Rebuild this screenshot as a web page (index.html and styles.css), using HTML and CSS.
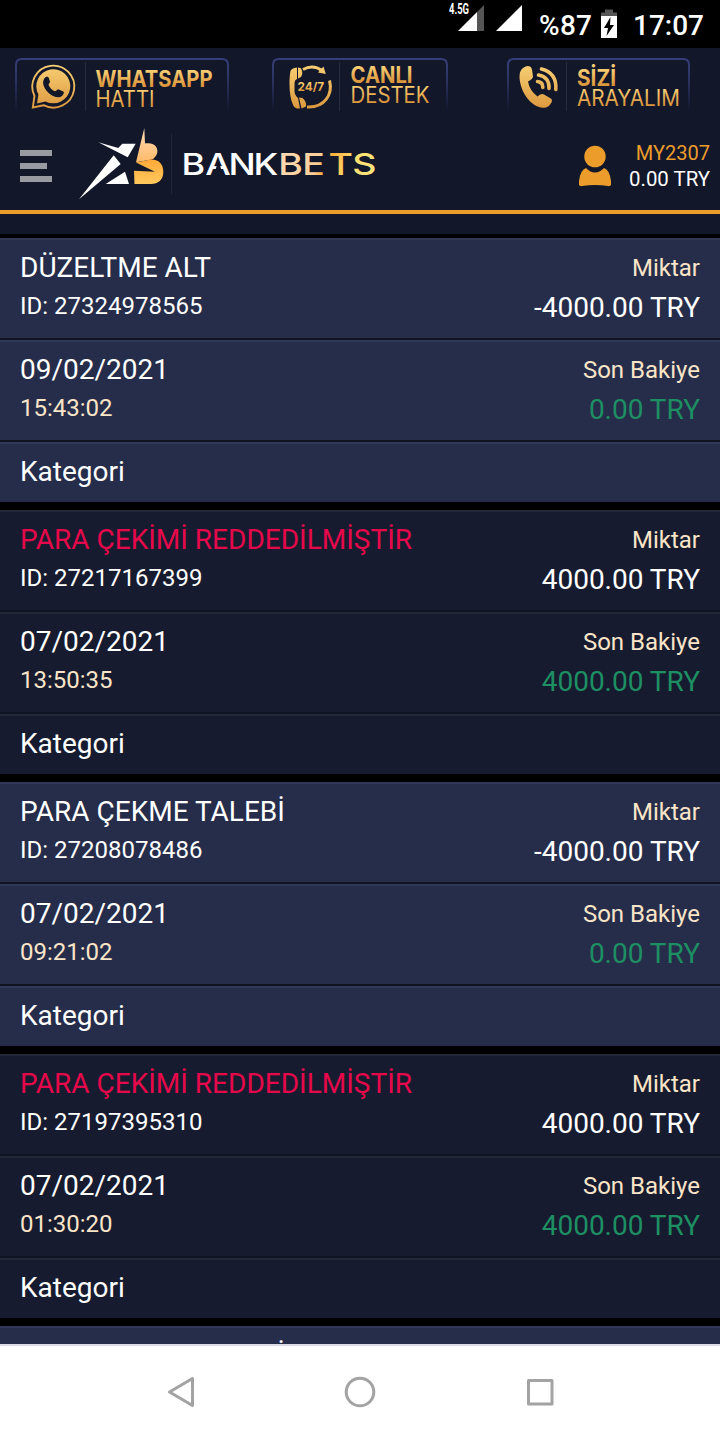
FILE: index.html
```html
<!DOCTYPE html>
<html lang="tr">
<head>
    <meta charset="UTF-8">
    <title>Bankbets</title>
    <link rel="stylesheet" href="styles.css">
</head>
<body>
    <div class="status">
        <svg width="260" height="48" viewBox="445 0 260 48">
            <text class="net" x="449" y="14" textLength="20" lengthAdjust="spacingAndGlyphs">4.5G</text>
            <path fill="#fff" d="M458 31L477 12V31z"/>
            <path fill="#555" d="M477 12L484 5V31H477z"/>
            <path fill="#fff" d="M496 31L522 5V31z"/>
            <text class="stat" x="539" y="35" textLength="53">%87</text>
            <path fill="#555" d="M605 9.500h8v3h4v4h-16v-4h4z"/>
            <path fill="#fff" d="M601 16h16v22h-16z"/>
            <path d="M610.500 17L604 28h4l-1.500 8 7.500-11h-4z"/>
            <text class="stat" x="633" y="35" textLength="71">17:07</text>
        </svg>
    </div>
    <div class="header">
        <div class="contact">
            <svg width="214" height="56" viewBox="15 58 214 56">
                <defs>
                    <linearGradient id="line" x1="0" y1="58" x2="0" y2="112" gradientUnits="userSpaceOnUse">
                        <stop offset="0" stop-color="#363f79"/>
                        <stop offset=".4" stop-color="#2c3464"/>
                        <stop offset="1" stop-color="#12172a"/>
                    </linearGradient>
                    <linearGradient id="gold" x1="0" y1="0" x2="0" y2="1">
                        <stop offset="0" stop-color="#f8cf74"/>
                        <stop offset=".25" stop-color="#f6ca70"/>
                        <stop offset=".75" stop-color="#dc983e"/>
                    </linearGradient>
                    <linearGradient id="goldline" x1="0" y1="65" x2="0" y2="109" gradientUnits="userSpaceOnUse">
                        <stop offset="0" stop-color="#f8cf74"/>
                        <stop offset="1" stop-color="#dc983e"/>
                    </linearGradient>
                </defs>
                <path class="frame" d="M16 112V65q0-6 6-6H222q6 0 6 6V112"/>
                <path class="sep" d="M85.500 62V111"/>
                <path fill="none" stroke="url(#goldline)" stroke-width="1.900" d="M34.500 96A21 21 0 1 1 43.500 105.200L32.800 107.500z"/>
                <path fill="url(#goldline)" d="M38.400 94.500A17 17 0 1 1 45.500 101.400L37 103.600z"/>
                <path fill="#12172a" d="M45.500 77.200c1.500-.8 2.900-.4 3.300.9l1.200 3.400c.3 1-1.600 2.400-1.400 3.400 1.200 3 3.300 5 6.300 6.300 1.300.4 2.600-2.200 3.800-1.800l4.600 2.200c1.600.9-.4 5.400-4.300 5.700-7.500.3-15.700-8.200-15.900-14.400 0-2.400.9-4.700 2.400-5.700z"/>
                <text class="big" x="95.500" y="87" textLength="117" lengthAdjust="spacingAndGlyphs">WHATSAPP</text>
                <text class="thin" x="95.500" y="107" textLength="59" lengthAdjust="spacingAndGlyphs">HATTI</text>
            </svg>
            <svg width="177" height="56" viewBox="272 58 177 56">
                <path class="frame" d="M273 112V65q0-6 6-6H441q6 0 6 6V112"/>
                <path class="sep" d="M339.500 62V111"/>
                <path fill="url(#goldline)" d="M290.500 71q1-3 6.500-3.500v11.500q-2.500 1-2.500 4v8q0 4 3.500 7l2 10.500h-3q-3.500-1-4.500-5-3-7-3-20 0-8 1-12.500z"/>
                <path fill="url(#goldline)" d="M298 67.500l3 .8q2.500 5 0 8.700l-3 1.500zM299 97.500l3.500.5q4.500 4 3.500 8.500l-4.500 2z"/>
                <path fill="none" stroke="url(#goldline)" stroke-width="3" d="M303 69.500Q313 64 322 70.500M329.500 80.500C333 94 325 108 307 107"/>
                <path fill="url(#goldline)" d="M323.500 66.500L325.800 74 318 72.500z"/>
                <text class="day" x="297.500" y="91" textLength="26.500" lengthAdjust="spacingAndGlyphs">24/7</text>
                <text class="big" x="350.500" y="83" textLength="62" lengthAdjust="spacingAndGlyphs">CANLI</text>
                <text class="thin" x="350.500" y="103" textLength="79" lengthAdjust="spacingAndGlyphs">DESTEK</text>
            </svg>
            <svg width="183" height="56" viewBox="507 58 183 56">
                <path class="frame" d="M508 112V65q0-6 6-6H683q6 0 6 6V112"/>
                <path class="sep" d="M566.500 62V111"/>
                <path fill="url(#goldline)" d="M523 68q4-3 7-1.500 2 1 2.300 5l.7 5q0 2.500-5 5 1.500 9 9.500 15 4-3.500 6.500-2l6 3.500q3 1.500 1.500 4.500-3 5.500-8.500 5.200C531 107 520 92 519.500 77q0-6.500 3.500-9z"/>
                <path class="wave" d="M537.500 81.500Q543 82 542.800 87.500M538.500 75Q549.500 77 549 88.500M541.500 69Q557 73 555.800 89.500"/>
                <text class="big" x="577" y="86" textLength="39" lengthAdjust="spacingAndGlyphs">SİZİ</text>
                <text class="thin" x="577" y="106" textLength="103" lengthAdjust="spacingAndGlyphs">ARAYALIM</text>
            </svg>
        </div>
        <div class="bar">
            <div class="menu">
                <span></span>
                <span class="short"></span>
                <span></span>
            </div>
            <svg class="logo" width="300" height="76" viewBox="78 126 300 76">
                <defs>
                    <linearGradient id="bets" x1="224" y1="153" x2="296" y2="176" gradientUnits="userSpaceOnUse">
                        <stop offset="0" stop-color="#ffdab3"/>
                        <stop offset=".42" stop-color="#ffcf99"/>
                        <stop offset=".52" stop-color="#ffad3f"/>
                        <stop offset=".78" stop-color="#ffe06f"/>
                        <stop offset="1" stop-color="#ffe47d"/>
                    </linearGradient>
                    <linearGradient id="peach" x1="0" y1="0" x2="0" y2="1">
                        <stop offset="0" stop-color="#ffddb8"/>
                        <stop offset="1" stop-color="#ffb968"/>
                    </linearGradient>
                    <linearGradient id="amber" x1="0" y1="0" x2="0" y2="1">
                        <stop offset="0" stop-color="#ffa939"/>
                        <stop offset="1" stop-color="#ffc95c"/>
                    </linearGradient>
                </defs>
                <path fill="#fff" d="M98.300 142.300L118.300 148 122.300 143.700H135.700L127.700 157.300zM79 199.300L113.700 155.300 120.700 164zM105.700 184L125 171.700 129 184z"/>
                <path fill="url(#peach)" d="M144.300 128L145 143.300H149C157 143.300 160 152 155 157Q153.500 159 151.500 159.500L136 162.300z"/>
                <path fill="url(#amber)" d="M136 162.500L151 159.500C160 159.500 163.300 165 163.300 172 163.300 180 158 184 151 184H134.500L134 170.700 155 171.700z"/>
                <path stroke="#24273a" d="M171.500 134V194"/>
                <text class="brand" transform="scale(1.2 1)" y="175" x="151.300 171 190.500 211.300">BANK</text>
                <text class="brand bets" transform="scale(1.25 1)" y="175" x="222.600 241.800 262.800 281.800">BETS</text>
                <!-- the A has no crossbar -->
                <path fill="#12172a" d="M218.400 161L223.300 175.500H213.500z"/>
            </svg>
            <svg class="user" width="32" height="42" viewBox="579 145 32 42">
                <ellipse cx="595" cy="156.500" rx="10.700" ry="10.800"/>
                <path d="M586 168q9 9 18 0 5.500 1.500 7 13v4q-1 1.500-3 1-13-2-26 0-2 .5-3-1v-4q1.500-11.500 7-13z"/>
            </svg>
            <div class="account">
                <div class="name">MY2307</div>
                <div class="money">0.00 TRY</div>
            </div>
        </div>
    </div>
    <div class="list">
        <div class="item">
            <div class="row">
                <div class="left"><p>DÜZELTME ALT</p><p class="id">ID: 27324978565</p></div>
                <div class="right"><p>Miktar</p><p class="sum">-4000.00 TRY</p></div>
            </div>
            <div class="row">
                <div class="left"><p>09/02/2021</p><p class="time">15:43:02</p></div>
                <div class="right"><p>Son Bakiye</p><p class="sum green">0.00 TRY</p></div>
            </div>
            <div class="row cat"><div class="left"><p>Kategori</p></div></div>
        </div>
        <div class="item dark">
            <div class="row">
                <div class="left"><p class="red">PARA ÇEKİMİ REDDEDİLMİŞTİR</p><p class="id">ID: 27217167399</p></div>
                <div class="right"><p>Miktar</p><p class="sum">4000.00 TRY</p></div>
            </div>
            <div class="row">
                <div class="left"><p>07/02/2021</p><p class="time">13:50:35</p></div>
                <div class="right"><p>Son Bakiye</p><p class="sum green">4000.00 TRY</p></div>
            </div>
            <div class="row cat"><div class="left"><p>Kategori</p></div></div>
        </div>
        <div class="item">
            <div class="row">
                <div class="left"><p>PARA ÇEKME TALEBİ</p><p class="id">ID: 27208078486</p></div>
                <div class="right"><p>Miktar</p><p class="sum">-4000.00 TRY</p></div>
            </div>
            <div class="row">
                <div class="left"><p>07/02/2021</p><p class="time">09:21:02</p></div>
                <div class="right"><p>Son Bakiye</p><p class="sum green">0.00 TRY</p></div>
            </div>
            <div class="row cat"><div class="left"><p>Kategori</p></div></div>
        </div>
        <div class="item dark">
            <div class="row">
                <div class="left"><p class="red">PARA ÇEKİMİ REDDEDİLMİŞTİR</p><p class="id">ID: 27197395310</p></div>
                <div class="right"><p>Miktar</p><p class="sum">4000.00 TRY</p></div>
            </div>
            <div class="row">
                <div class="left"><p>07/02/2021</p><p class="time">01:30:20</p></div>
                <div class="right"><p>Son Bakiye</p><p class="sum green">4000.00 TRY</p></div>
            </div>
            <div class="row cat"><div class="left"><p>Kategori</p></div></div>
        </div>
        <div class="item">
            <div class="row">
                <div class="left"><p>PARA ÇEKME TALEBİ</p></div>
            </div>
        </div>
    </div>
    <div class="nav">
        <svg width="32" height="32" viewBox="0 0 32 32"><path d="M4.500 16L27.500 2.500V29.500z"/></svg>
        <svg width="32" height="32" viewBox="0 0 32 32"><circle cx="16" cy="16" r="13.800"/></svg>
        <svg width="32" height="32" viewBox="0 0 32 32"><path d="M4.500 4.500H28V28H4.500z"/></svg>
    </div>
</body>
</html>
```
FILE: styles.css
```css
*{
    margin: 0;
    padding: 0;
    box-sizing: border-box;
}
body{
    width: 720px;
    height: 1440px;
    overflow: hidden;
    display: flex;
    flex-direction: column;
    background: #000;
    color: #fff;
    font-family: Roboto, "Noto Sans", sans-serif;
}
svg{
    display: block;
}
.status{
    height: 48px;
    display: flex;
    justify-content: flex-end;
    padding-right: 15px;
    background: #000;
}
.status text{
    fill: #fff;
}
.net{
    font-size: 15px;
    font-weight: 700;
}
.stat{
    font-size: 28px;
    font-weight: 500;
}
/*header*/
.header{
    height: 186px;
    background: #12172a;
}
.contact{
    height: 72px;
    padding: 10px 30px 0 15px;
    display: flex;
    justify-content: space-between;
}
.contact svg:nth-child(2){
    margin-left: -16px;
}
.frame{
    fill: none;
    stroke: url(#line);
    stroke-width: 2;
}
.sep{
    stroke: #292c3a;
}
.wave{
    fill: none;
    stroke: url(#goldline);
    stroke-width: 3.6;
    stroke-linecap: round;
}
.big, .thin, .day{
    fill: url(#gold);
    font-family: Inter, Roboto, sans-serif;
    font-size: 22.5px;
}
.big{
    font-weight: 700;
}
.thin{
    font-weight: 400;
}
.day{
    font-size: 11.5px;
    font-weight: 700;
}
.bar{
    height: 94px;
    display: flex;
    align-items: flex-start;
    padding: 6px 10px 0 20px;
    border-bottom: 4px solid #ec9c2b;
}
.menu{
    width: 58px;
    padding-top: 24px;
}
.menu span{
    display: block;
    width: 32px;
    height: 6px;
    margin-bottom: 7px;
    background: #989ba2;
}
.menu .short{
    width: 27px;
}
.brand{
    fill: #fff;
    font-family: Inter, Roboto, sans-serif;
    font-size: 30px;
    font-weight: 500;
}
.bets{
    fill: url(#bets);
}
.user{
    margin: 19px 0 0 auto;
    fill: #ec9c2b;
}
.account{
    width: 99px;
    padding-top: 14px;
    text-align: right;
    font-size: 20px;
    line-height: 26px;
    white-space: nowrap;
}
.name{
    color: #ec9c2b;
}
.money{
    font-size: 20.4px;
}
/*transactions*/
.list{
    height: 1110px;
    padding-top: 4px;
    overflow: hidden;
}
.item{
    margin-bottom: 8px;
    background: #101322;
}
.row{
    height: 100px;
    margin-bottom: 2px;
    padding: 0 20px;
    display: flex;
    justify-content: space-between;
    background: #262d4a;
    border-top: 2px solid #30385a;
    white-space: nowrap;
}
.dark .row{
    background: #171b2f;
    border-top-color: #23273a;
}
.cat{
    height: 60px;
    margin-bottom: 0;
}
.left{
    padding-top: 9px;
    font-size: 28px;
    line-height: 38px;
}
.left .id, .left .time{
    font-size: 24px;
}
.right{
    padding-top: 10px;
    text-align: right;
    font-size: 24px;
    line-height: 36px;
    color: #fbe5c8;
}
.time{
    color: #fbe5c8;
}
.right .sum{
    font-size: 28px;
    line-height: 43px;
    color: #fff;
}
.right .green{
    color: #1d8f63;
}
.red{
    color: #e5094c;
}
/*phone buttons*/
.nav{
    height: 96px;
    padding: 30px 164px 0;
    display: flex;
    justify-content: space-between;
    background: #fff;
    border-top: 2px solid #dddce6;
}
.nav svg:first-child{
    margin-left: .5px;
}
.nav path, .nav circle{
    fill: none;
    stroke: #a3a3a3;
    stroke-width: 3;
    stroke-linejoin: round;
}
```
